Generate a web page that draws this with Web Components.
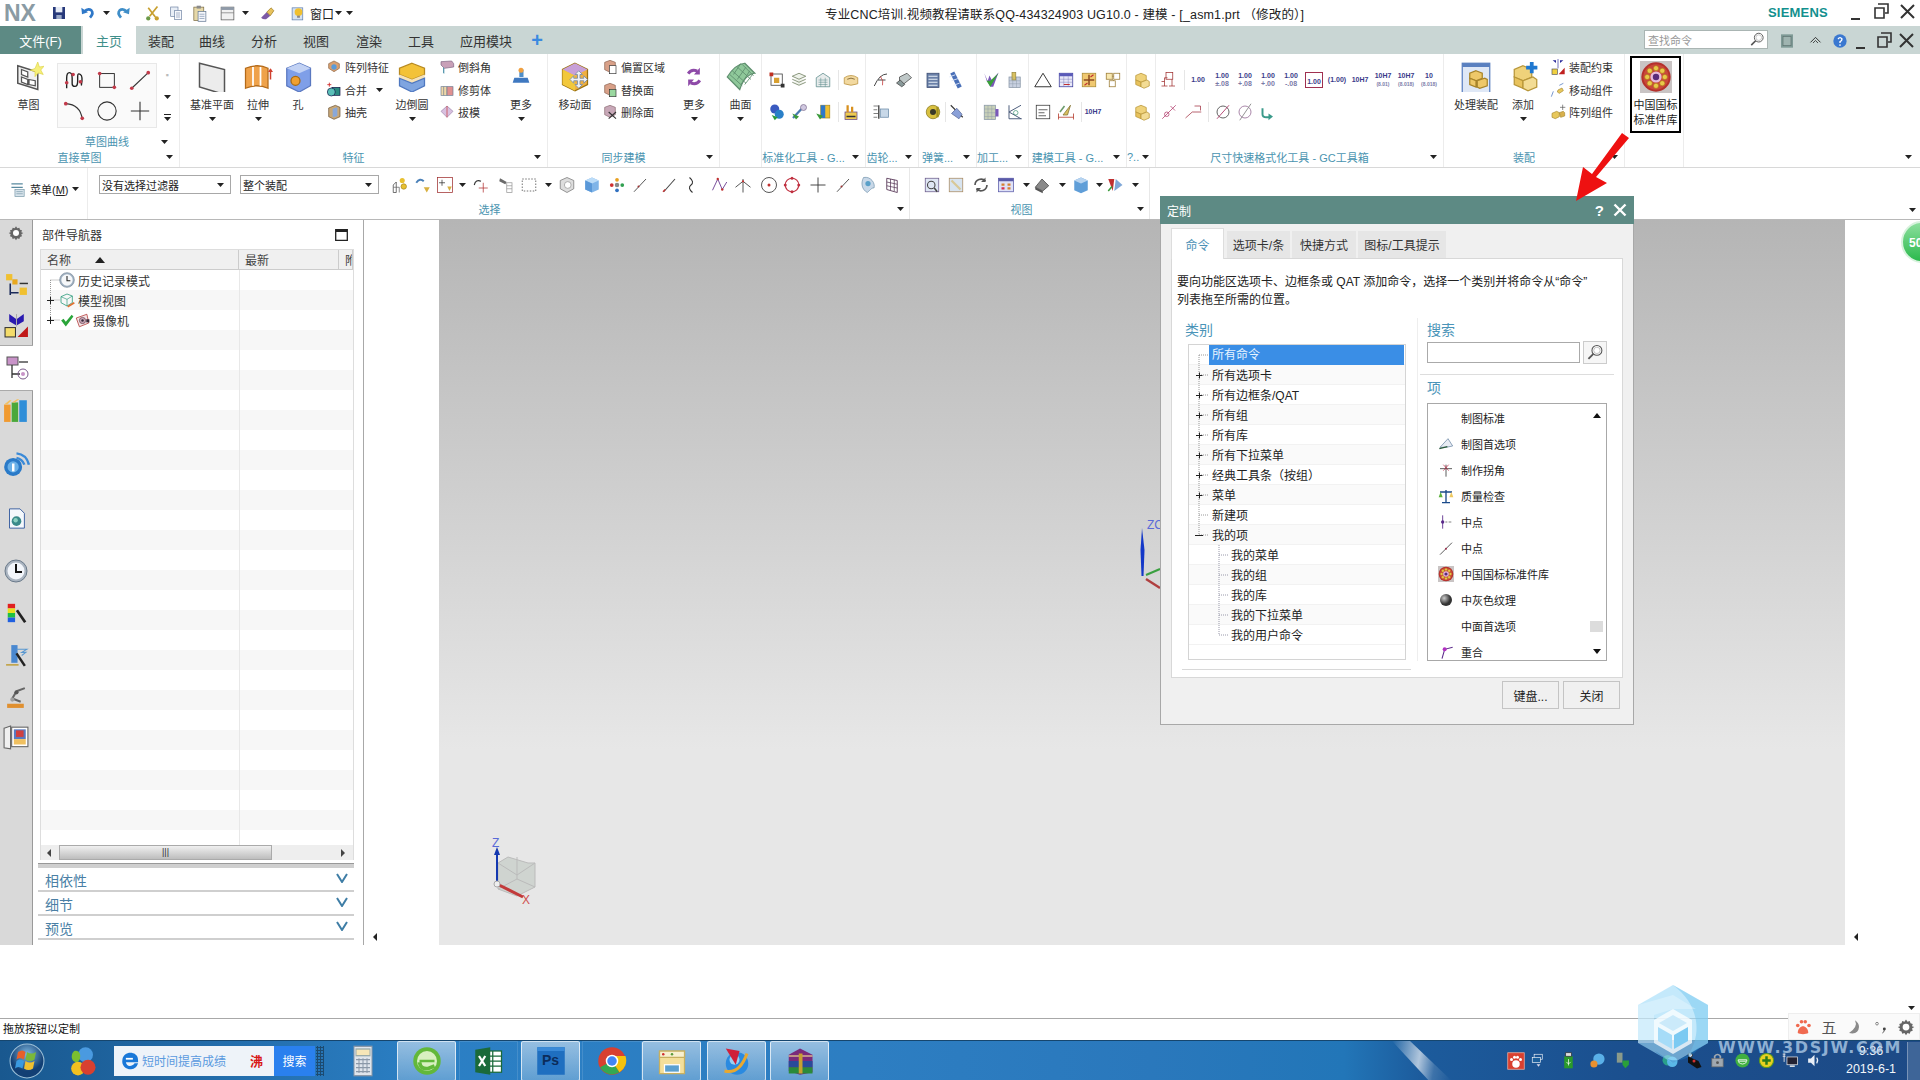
<!DOCTYPE html>
<html lang="zh">
<head>
<meta charset="utf-8">
<title>NX</title>
<style>
  html, body { margin: 0; height: 1080px; overflow: hidden; background: #fff; }
  body { font: 12px "Liberation Sans", "Noto Sans CJK SC", sans-serif; color: #222; display: flex; flex-direction: column; position: relative; }
</style>
</head>
<body>
<nx-titlebar></nx-titlebar>
<nx-tabs></nx-tabs>
<nx-ribbon></nx-ribbon>
<nx-toolbar></nx-toolbar>
<nx-main></nx-main>
<nx-status>拖放按钮以定制</nx-status>
<nx-taskbar></nx-taskbar>
<nx-dialog></nx-dialog>
<nx-overlay></nx-overlay>

<script>
const BOX = (x, y, w, h, f, s) => `<rect x="${x}" y="${y}" width="${w}" height="${h}" fill="${f}"${s ? ` stroke="${s}"` : ''}/>`
const P = (d, f, s, w) => `<path d="${d}" fill="${f || 'none'}"${s ? ` stroke="${s}" stroke-width="${w || 1}"` : ''}/>`
const C = (x, y, r, f, s, w) => `<circle cx="${x}" cy="${y}" r="${r}" fill="${f || 'none'}"${s ? ` stroke="${s}" stroke-width="${w || 1}"` : ''}/>`

const cubes = P('M12 3l7 3v6l-7 3-7-3V6z', '#efd27a', '#b89638') + P('M5 12l7 3v6l-7-3z', '#e8c25c', '#b89638') + P('M12 15l8-3 3 2v6l-7 3-4-2z', '#f3dc94', '#b89638')
const wheel = (() => {
  let d = ''
  for (let i = 0; i < 8; i++) {
    const a = i * Math.PI / 4
    d += C((12 + 6.6 * Math.cos(a)).toFixed(1), (12 + 6.6 * Math.sin(a)).toFixed(1), 1.9, '#e9c84a', '#a87a10', .4)
  }
  return BOX(0, 0, 24, 24, '#c9c4c4') + C(12, 12, 11, '#b5302c') + C(12, 12, 9.5, '#c9483a') + d + C(12, 12, 4.2, '#e8b8d8') + C(12, 12, 2.4, '#5a2a7a')
})()

const ICONS = {
  save: BOX(3, 3, 18, 18, '#27397a') + BOX(7, 3, 10, 8, '#e6ebf5') + BOX(8, 15, 8, 6, '#9aa8c6'),
  undo: P('M6 10q6-6 11-2 4 4-2 11', null, '#2f78c8', 4) + P('M2 4l1 10 9-3z', '#2f78c8'),
  redo: P('M18 10q-6-6-11-2-4 4 2 11', null, '#3f8ec8', 4) + P('M22 4l-1 10-9-3z', '#3f8ec8'),
  cut: P('M19 2L8 16M6 4l10 13', null, '#c8a030', 2.4) + C(6, 19, 3, '#6c9a48') + C(18, 19, 3, '#c8a030'),
  copy: BOX(4, 3, 11, 14, '#e8eef6', '#6a7fa0') + BOX(10, 8, 10, 14, '#f6f8fc', '#6a7fa0') + P('M12 12h6M12 15h6M12 18h6', null, '#7f93b0'),
  paste: BOX(4, 3, 14, 19, '#e6d8a8', '#7a6a40') + BOX(8, 1, 6, 4, '#8a8a8a') + BOX(10, 9, 11, 14, '#f6f8fc', '#5f7590') + P('M12 13h7M12 16h7M12 19h7', null, '#7f93b0'),
  layout: BOX(3, 3, 18, 18, '#f1f1f1', '#555') + BOX(3, 3, 18, 4, '#8f9aa8') + P('M3 11h18', null, '#777'),
  brush: P('M3 18l8-8 5 5-6 5q-4 1-7-2z', '#7c5aa6') + P('M11 10l6-6 4 4-5 7z', '#e8c25c', '#9a7a20'),
  winyellow: BOX(3, 4, 15, 17, '#d5e2f2', '#5d7fb0') + C(12, 10, 5.5, '#f0c030') + BOX(10, 15, 4, 3, '#888'),
  sketch: P('M3 3l16 5v14L3 17z', '#f1f1f1', '#555', 1.2) + P('M6 6l5 2v4l-5-2zM6 12l5 2v4l-5-2zM12 14l5 1v4l-5-1z', '#fff', '#555') + P('M19 0l1.3 4 3.7-.6-2.6 3 2 3.6-4-1.3-2.6 3v-4l-3.8-1.2 3.8-1.3z', '#f6ef7a', '#dcd040', .5),
  profile: P('M4 21V10q0-6 3-6t3 6v6q0 3 3 3t3-6V8q0-4 3-2t1 12', null, '#222', 1.5) + C(4, 15, 2, '#c23a4a') + C(11, 6, 2, '#c23a4a') + C(19, 14, 2, '#c23a4a'),
  rect: BOX(4, 5, 16, 15, 'none', '#222') + C(4, 5, 2, '#c23a4a') + C(20, 20, 2, '#c23a4a'),
  line: P('M3 21L21 4', null, '#333', 1.2) + C(3, 21, 2, '#c23a4a') + C(21, 4, 2, '#c23a4a'),
  arc: P('M3 4q16 1 18 17', null, '#333', 1.2) + C(3, 4, 2, '#c23a4a') + C(21, 20, 2, '#c23a4a'),
  circle: C(12, 12, 10, null, '#333', 1.2),
  plus: P('M12 2v20M2 12h20', null, '#333', 1.2),
  plane: P('M2 1l20 5v20L2 20z', '#ececec', '#555', 1.2),
  extrude: P('M2 5q10-4 18 0v16q-9-4-18 0z', '#efa24a', '#b36a1a') + P('M8 4v15M14 4v15', null, '#fff', 1.4) + P('M22 6v8', null, '#d04030', 1.2) + P('M20 8l2-3 2 3', '#d04030'),
  hole: P('M3 5l10-4 9 4v14l-9 5-10-5z', '#7f9fe8', '#5a78c0') + P('M3 5l10 4 9-4-9-4z', '#c2d2f4') + C(10, 15, 3.6, '#f0a030', '#a86a10'),
  blend: P('M12 1l10 4v5l-10 4L2 10V5z', '#f3c238', '#b88a20') + P('M2 10l10 4 10-4v3l-10 4-10-4z', '#f6e2b8') + P('M2 13l10 4 10-4v6l-10 5-10-5z', '#7fa5e0', '#4f78c0'),
  morefeat: P('M10 3h5v9h-5z', '#4f8ec8') + C(12, 4, 3, '#f0a040') + P('M4 13h16l2 6H2z', '#3f78c0'),
  movef: P('M12 1l10 5v12l-10 5-10-5V6z', '#f0b040', '#9a7010') + P('M12 1l10 5-10 5L2 6z', '#c8a0d8') + P('M2 6l10 5v12L2 18z', '#f2c83c') + P('M15 7l3 3h-2v3h3v-2l3 3-3 3v-2h-3v3h2l-3 3-3-3h2v-3h-3v2l-3-3 3-3v2h3v-3h-2z', '#eef0f4', '#7f8fa4', .7),
  moresync: P('M5 8q4-6 11-3M19 16q-4 6-11 3', null, '#8e4aa8', 3.5) + P('M19 1v8h-7zM5 23v-8h7z', '#8e4aa8'),
  surface: P('M1 12Q7 2 15 1l8 8q-8 1-12 13z', '#8fc89a', '#5f8f6f') + P('M5 7l11 10M9 4l11 10M13 2l9 9M3 10l10 9M9 14l7-10M6 10l6-9M12 18l7-11M15 18l7-9', null, '#5f8f6f', .7),
  process: BOX(1, 1, 22, 24, '#dfe8f6', '#5a80c0') + BOX(1, 1, 22, 3, '#5a80c0') + P('M12 7l5 2v4l-5 2-5-2V9z', '#eec869', '#a8842a') + P('M7 13l5 2v5l-5-2zM13 15l6-2 2 1v5l-6 2-2-1z', '#eec869', '#a8842a'),
  add: cubes + P('M19 0v9M14.5 4.5h9', null, '#1f78d0', 3),
  gb: wheel,
  pattern: P('M12 3l8 4v7l-8 5-8-5V7z', '#d9a070', '#8a6040') + C(12, 12, 4, '#5a9ad8'),
  unite: BOX(9, 8, 12, 12, '#2a8a80', '#114') + C(8, 15, 6, '#5ac0b8', '#114') + P('M5 1v6M2 4h6', null, '#d03030', 1.4),
  shell: P('M4 6l10-4 7 3v14l-9 4-8-4z', '#c8a878', '#6a5030') + P('M10 7l7-2v13l-7 2z', '#8aa8d8'),
  chamfer: P('M3 4l16-1 3 4v5L8 14 3 9z', '#c8a0b8', '#7a6080') + P('M8 14v8l-2-1V12z', '#5a9ab0'),
  trim: BOX(3, 7, 9, 13, '#f0d8a8', '#6a7a90') + BOX(12, 7, 9, 13, '#e09090', '#6a7a90') + P('M7 7v13', null, '#6a7a90'),
  draft: P('M12 3l9 8-9 9-9-9z', '#d8c0e0', '#9a80a8') + P('M12 3v17', null, '#c83030'),
  offset: P('M4 5l8-3 8 3v11l-8 4-8-4z', '#d8a088', '#8a6050') + BOX(11, 10, 10, 12, '#fff', '#333'),
  replace: P('M4 5l8-3 8 3v11l-8 4-8-4z', '#d8a088', '#8a6050') + BOX(11, 11, 10, 11, '#9ad8a0', '#333'),
  del: P('M4 5l8-3 8 3v11l-8 4-8-4z', '#c8a8b8', '#8a6a70') + P('M10 12l11 10M21 12L10 22', null, '#333', 1.6),
  constraint: P('M4 2l5 4v-4M20 2l-5 4v-4', '#2a2a9a') + P('M12 0v14', null, '#2a2a9a') + BOX(3, 15, 8, 8, '#f0d040', '#555') + P('M13 23l9-10v10z', '#c02020'),
  movecomp: P('M12 12l6-3 2 4-6 4-3-2z', '#e8c85c', '#a88a30') + P('M2 22l3-8M20 2l-6 3', null, '#7a9ad0', 1.5),
  patcomp: P('M3 14l7-3 4 2v6l-6 3-5-2z', '#e8c85c', '#a88a30') + P('M14 13l6-2 2 2v5l-6 2z', '#d8b04c', '#a88a30') + P('M19 1v8M15 5h8', null, '#555', 1),
  std1: BOX(4, 4, 15, 15, 'none', '#333', 1.4) + BOX(2, 2, 5, 5, '#c03020') + BOX(17, 17, 5, 5, '#333') + BOX(8, 9, 7, 7, '#d8a030'),
  std2: P('M12 3l9 4-9 4-9-4zM3 11l9 4 9-4M3 15l9 4 9-4', '#eef2ea', '#6a7a5a'),
  std3: P('M3 9l9-6 9 6v12H3z', '#e8ecec', '#5a8a8a') + P('M6 12h12M6 15h12M6 18h12M9 9v12M15 9v12', null, '#5a8a8a', .7),
  std4: P('M3 9q9-6 18 0v8q-9 4-18 0z', '#f2d9a0', '#b8903c') + P('M7 11q5-3 10 0', null, '#6a5020'),
  std5: C(9, 8, 6, '#3a5ac0') + C(15, 15, 6, '#2a80c8') + P('M5 16l4 7 4-4z', '#2a9a3a'),
  std6: P('M4 20L18 5', null, '#4a7ab0', 3) + C(18, 6, 4, '#d0c8e0', '#807090') + P('M3 14l5 8 4-4z', '#3a9a3a'),
  std7: BOX(9, 3, 12, 17, '#f0c030', '#a88a20') + BOX(9, 3, 6, 17, '#2f78c8') + P('M3 14l5 8 4-5z', '#3a9a3a'),
  std8: BOX(4, 12, 16, 10, '#eeca50', '#6a4a8a') + P('M6 12V3h3v9M12 12V5h3v7', '#d8901e') + P('M6 18h12', null, '#333', 2),
  gear1: P('M3 20Q10 4 20 4', null, '#333', 1.2) + P('M8 12h10', null, '#333', 1.2) + P('M11 7q5 6 3 12', null, '#c03030'),
  gear2: P('M6 8l10-5 6 6-10 8-6-3z', '#bfc8c8', '#444') + P('M2 16l7 5 4-3-6-6z', '#8a9a9a', '#444'),
  gear3: P('M2 4h6M2 9h5M2 14h6M2 19h5', null, '#555') + BOX(11, 8, 11, 11, '#c8d8e8', '#6a8aa8') + BOX(8, 3, 2, 18, '#555'),
  sp1: BOX(4, 3, 16, 19, '#6a80a8', '#3a4a70') + P('M6 7h12M6 11h12M6 15h12M6 19h12', null, '#e8eef6', 1.5),
  sp2: P('M7 2l10 20', null, '#4a70b8', 6) + P('M3 8l8-3M6 13l9-3M9 19l8-3', null, '#e0e8f8', 1.2),
  sp3: C(12, 12, 9, '#d8c040', '#8a7a20') + C(12, 12, 4, '#3a3a2a') + P('M18 5v14', null, '#a09020', 3),
  sp4: P('M5 3l16 16', null, '#333', 1.5) + P('M6 14l7-7 7 8-4 6z', '#8aa0d8', '#5a6a9a'),
  mach1: P('M3 3l4 12 3-9 3 6 9-10-7 19h-4z', '#7a58b8') + P('M6 13l5 8 11-18-11 10z', '#3aa03a'),
  mach2: BOX(4, 8, 15, 14, '#c8d0e0', '#8a98a8') + BOX(8, 2, 5, 10, '#d8c060', '#9a8a40') + P('M4 13h15M4 17h15M9 8v14M14 8v14', null, '#8a98a8', .6),
  mach3: BOX(3, 3, 15, 19, '#c8d0b8', '#8a98a8') + P('M3 8h15M3 13h15M3 18h15M8 3v19M13 3v19', null, '#8a98a8', .6) + BOX(18, 8, 4, 10, '#7a58b8'),
  mach4: P('M4 3v18h17M4 12L20 3M4 12l16 9', null, '#4a5a7a', 1.3) + C(13, 13, 3, null, '#4a9a7a'),
  tri: P('M12 3L23 21H1z', '#fff', '#222', 1.2),
  table: BOX(3, 3, 18, 18, '#e8e8f8', '#3a3a9a') + BOX(3, 3, 18, 4, '#5a5ab8') + P('M3 11h18M3 15h18M9 7v14M15 7v14', null, '#7a7ab8', .6) + P('M9 18h8', null, '#c03030', 1.4),
  mt3: BOX(3, 3, 18, 18, '#f0c870', '#a88a30') + P('M12 5v14M5 12h14', null, '#8a4a20', 2) + P('M6 19l4-3M14 8l4-3', null, '#c03030', 1.5),
  mt4: BOX(3, 3, 8, 8, '#f8e8b0', '#9a7a30') + BOX(13, 3, 8, 8, '#fff', '#9a7a30') + BOX(7, 13, 8, 8, '#fff', '#9a7a30') + P('M11 7h2M11 11l2 2', null, '#9a7a30'),
  note: BOX(3, 3, 18, 18, '#fff', '#333', 1.2) + P('M6 9h12M6 13h8M6 17h10', null, '#333'),
  dim: P('M2 14v8M22 14v8M2 19h20', null, '#b03020') + P('M8 16L18 3l-4 13z', '#d8c060', '#807030') + P('M4 12l6-8', null, '#6a9a6a', 2),
  folders: cubes,
  step: BOX(8, 2, 9, 9, 'none', '#a03030') + P('M2 20h8M6 20V9h4M16 11v9M12 20h8', null, '#a03030') + P('M2 14h4', null, '#a03030'),
  tol1: P('M3 21L21 3', null, '#b03a6a', 1) + C(9, 15, 3, null, '#b03a6a') + P('M14 4l6 6', null, '#b03a6a'),
  tol2: P('M2 20l9-8h12', null, '#a03040') + P('M14 4h8v6', null, '#a03040'),
  phi1: C(12, 12, 8, null, '#555', 1.2) + P('M4 21L20 3', null, '#b03a6a', 1.2),
  phi2: C(12, 12, 8, null, '#a07aa0', 1.2) + P('M5 23L20 1', null, '#888', 1.2),
  hook: P('M6 7v8q0 4 5 4h5', null, '#3a9a8a', 2.6) + P('M14 14v9l6-5z', '#3a9a8a'),
  menu: P('M2 4h16M2 9h16', null, '#5a8aa0', 1.6) + BOX(7, 12, 13, 10, '#d8e4ec', '#7a9aaa') + P('M9 15h9M9 18h9', null, '#7a9aaa'),
  sel1: P('M3 22V12l4-4v14z', '#fff', '#444') + P('M3 15h8v7', null, '#666') + C(15, 6, 3.4, '#e8c030') + C(17, 14, 3.6, '#e8c030', '#a88a20'),
  sel2: P('M3 9q5-7 10-2', null, '#4a80b8', 2.6) + P('M13 15h8l-4 7z', '#d8b040'),
  sel3: BOX(2, 2, 20, 20, '#fff', '#a03030', 1.2) + P('M8 5v8M4 9h8', null, '#333') + P('M15 14h6l-3 6z', '#d8b040'),
  sel4: P('M3 12q2-8 9-5', null, '#333', 1.5) + P('M15 9v13M9 16h12', null, '#b03030'),
  sel5: P('M4 3l9 5-2 3-8-4z', '#6a6a6a') + BOX(13, 9, 7, 13, 'none', '#9a9a9a') + P('M13 13h7M13 17h7', null, '#9a9a9a'),
  dashes: `<rect x="3" y="4" width="18" height="16" fill="none" stroke="#444" stroke-dasharray="2 2"/>`,
  cubeg: P('M12 2l9 4v11l-9 5-9-5V6z', '#ddd', '#777') + C(13, 12, 4.5, '#fff', '#999'),
  cubeb: P('M12 2l9 4v12l-9 4-9-4V6z', '#7fb4e8') + P('M12 2l9 4-9 4-9-4z', '#bcdcf8') + P('M12 10v12L3 18V6z', '#5a98d8'),
  dots: C(5, 12, 2.5, '#d03030') + C(12, 5, 2.5, '#e8a020') + C(19, 12, 2.5, '#30a050') + C(12, 19, 2.5, '#3070c0') + C(12, 12, 3, '#888'),
  ln: P('M4 21L20 4', null, '#444', 1.2) + C(10, 14, 1.3, '#a03030'),
  ln2: P('M5 21L20 4', null, '#444', 1.4) + P('M4 21l3-3', null, '#c03030', 2),
  curve: P('M10 2q7 6 2 10t2 10', null, '#333', 1.4),
  zig: P('M2 19L9 4l6 14 6-10', null, '#6a3a90', 1.2) + C(9, 4, 1.6, '#c03030') + C(15, 18, 1.6, '#c03030'),
  fork: P('M12 4v18M2 15l10-8 10 8', null, '#444', 1.2) + C(12, 7, 1.5, '#c03030'),
  ptc: C(12, 12, 10, null, '#444', 1.2) + C(12, 12, 2, '#c03030'),
  ring: C(12, 12, 9, null, '#c03040', 1.5) + C(12, 3, 2, '#c03040') + C(12, 21, 2, '#c03040') + C(3, 12, 2, '#c03040') + C(21, 12, 2, '#c03040'),
  wire: P('M6 2c10-2 16 8 14 14-3-1-6 4-9 6C4 18 2 10 6 2z', '#c8d8e8', '#7a98b0') + C(12, 10, 3.5, '#5aa0c8'),
  gridc: P('M5 3l14 3v16L5 18z', '#fff', '#5a3a5a', 1.2) + P('M10 4v15M15 5v15M5 8l14 3M5 13l14 3', null, '#5a3a5a', 1),
  v1: BOX(3, 3, 18, 18, '#dfe6f4', '#6a5a8a') + C(11, 12, 5, null, '#444', 1.4) + P('M15 16l4 5', null, '#444', 2),
  v2: BOX(3, 3, 18, 18, '#d8e4f0', '#a88a60') + P('M6 6l12 12', null, '#d8c898', 3),
  v3: P('M4 12a8 8 0 0 1 14-5M20 12a8 8 0 0 1-14 5', null, '#555', 2.2) + P('M18 2v6h-6M6 22v-6h6', '#555'),
  v4: BOX(2, 3, 20, 18, '#dfe2f8', '#5a5aa8') + BOX(2, 3, 20, 4, '#5a5aa8') + BOX(6, 10, 4, 3, '#d88030') + BOX(14, 10, 4, 3, '#d88030') + BOX(6, 15, 4, 3, '#d83050') + BOX(14, 15, 4, 3, '#d88030'),
  v5: P('M3 15l9-11 9 9-8 7z', '#8a8a8a', '#444') + P('M3 15l10 5v3l-10-5z', '#555'),
  v6: P('M12 2l9 4v13l-9 4-9-4V6z', '#5f9ed8') + P('M12 2l9 4-9 4-9-4z', '#b8d4f0'),
  v7: P('M3 4l6 16 2-16z', '#c03030') + P('M13 4l-2 16 11-8z', '#80a8d8') + P('M3 20l5-6', null, '#3a9a3a', 2),
  clock: C(12, 12, 11, '#9fb0c0', '#7a8a9a') + C(12, 12, 8.5, '#f6f8fa') + P('M12 6v7h5', null, '#222', 1.6),
  wire3d: P('M3 7l9-4 8 3v10l-8 5-9-5z', 'none', '#2a9a7a', 1.2) + P('M3 7l9 4 8-5M12 11v10', null, '#2a9a7a') + P('M13 22l10-6', null, '#e07030', 2.6),
  check: P('M2 13l4-3 4 5L20 3l3 3-13 17z', '#2aa53a'),
  camera: P('M2 8l17-6 3 14-15 6z', '#f4e6e6', '#b03030', 1.2) + C(12, 12, 5, '#c8a8b8', '#5a2a3a') + C(12, 12, 2, '#3a2a3a') + BOX(18, 10, 5, 5, '#3a2a3a'),
  tree1: BOX(2, 2, 6, 6, '#f0c030') + BOX(8, 7, 5, 5, '#e8a820') + P('M6 11v11M6 20h8', null, '#1a2a5a', 1.5) + P('M15 11h8', null, '#333', 1.4) + BOX(15, 15, 7, 7, '#f0c030'),
  rail2: P('M5 1v7l7 4 7-4V1l-7 5z', '#2a1ab0') + P('M12 1v12', null, '#aaa') + BOX(1, 14, 10, 9, '#f4dc6a', '#333') + P('M13 23l10-10v10z', '#c01818'),
  rail3: BOX(2, 1, 11, 8, '#c893c8', '#555') + P('M7 9v13M7 18h8', null, '#333', 1.3) + P('M14 6h9', null, '#333', 1.3) + C(18, 18, 5, null, '#7a5a8a') + C(18, 18, 2, '#c893c8'),
  books: P('M1 7h6v16H1z', '#f09a30') + P('M8 5h6v18H8z', '#4aa83a') + P('M15 3h7v20h-7z', '#2f8ed8') + P('M1 7l5-4h2L4 7zM8 5l5-3h2l-4 3z', '#f3c060'),
  wifi: C(9, 15, 8, '#2a7ac8') + C(9, 15, 5, '#6ab0e8') + BOX(8, 12, 2.2, 7, '#fff') + P('M12 3q9 1 11 10M12 7q5 1 7 6', null, '#3a8ad8', 2.2),
  doc: P('M4 1h12l5 5v17H4z', '#f4f8fc', '#3a60a0', 1.1) + C(12, 15, 5.5, '#3a8a8a') + C(11, 14, 2.5, '#8ad0c0'),
  clock2: C(12, 12, 11, '#aab4c0', '#6a7a8a') + C(12, 12, 8.5, '#f2f5fa') + P('M12 5v8h6', null, '#111', 2),
  ramp: BOX(3, 2, 8, 5, '#e02020') + BOX(3, 7, 8, 5, '#e8e020') + BOX(3, 12, 8, 5, '#20c040') + BOX(3, 17, 8, 5, '#2060e0') + P('M13 9l9 13', null, '#222', 3),
  flag: P('M7 2h6v17H7z', '#4a88d0') + P('M12 6h10l-5 3 4 0-4 3', null, '#5a98d0') + P('M12 10l8 12', null, '#222', 2.4) + P('M2 21h12', null, '#c0a040', 1.5),
  robot: P('M12 6l8-3M12 6l-4 7 8 3', null, '#666', 2) + C(12, 7, 2, '#555') + BOX(3, 18, 16, 4, '#e09030') + C(8, 14, 2, '#a0a0a0'),
  roles: P('M1 3l6-2v21l-6-1z', '#f0f0f0', '#666') + BOX(8, 2, 15, 18, '#fff', '#666') + BOX(10, 4, 11, 9, '#5a7ac0') + BOX(12, 5, 7, 6, '#d04040') + BOX(10, 13, 11, 5, '#f0c060'),
  gearsm: P('M12 2l2 3 3-1 1 3 3 1-1 3 3 1-3 2 1 3-3 1-1 3-3-1-2 3-2-3-3 1-1-3-3-1 1-3-3-2 3-1-1-3 3-1 1-3 3 1z', '#666') + C(12, 12, 4.5, '#fff'),
  mag: C(14, 9, 7, '#fff', '#555', 1.5) + C(14, 9, 4.5, null, '#aaa') + P('M9 14l-7 7', null, '#555', 2.6),
  fit: BOX(3, 2, 18, 20, '#7f9a96') + BOX(6, 5, 12, 14, '#9fb4b0', '#5a706c'),
  chev: P('M4 15l8-8 8 8', null, '#222', 1.4) + P('M8 16l4-4 4 4', null, '#222', 1.2),
  help: C(12, 12, 10, '#3a78d0') + P('M9 9q3-4 6 0 0 3-3 4v2', null, '#fff', 2) + C(12, 18, 1.3, '#fff'),
  distort: `<defs><radialGradient id="gb" cx=".35" cy=".35"><stop offset="0" stop-color="#ccc"/><stop offset="1" stop-color="#333"/></radialGradient></defs><circle cx="12" cy="12" r="9" fill="url(#gb)"/>`,
  pt1: P('M7 2v20', null, '#5a2a8a', 1.3) + C(7, 12, 2.5, '#5a2a8a') + P('M11 12h3M16 12h4', null, '#444'),
  ln3: P('M3 22L21 4', null, '#333', 1.2) + C(12, 13, 1.5, '#a03050'),
  ln4: P('M6 22L10 8l12-3', null, '#5a2a8a', 1.6) + C(10, 8, 3, '#b030c0'),
  draftp: P('M3 17L15 4l7 11-10 2z', '#e8ecf4', '#5a7a9a') + P('M2 19l12-3', null, '#2a5a3a', 2),
  corner: P('M12 4v18M3 10h18', null, '#333', 1.2) + P('M8 4l8 9M16 4l-8 9', null, '#c02040'),
  balance: P('M12 3v18M6 22h12M3 6h18', null, '#1a4a8a', 2) + P('M1 14l3-8 3 8z', '#5ab03a') + P('M17 14l3-8 3 8z', '#eec860'),
  orb: `<defs><radialGradient id="ob" cx=".5" cy=".3"><stop offset="0" stop-color="#7fb8e0"/><stop offset="1" stop-color="#123f74"/></radialGradient></defs><circle cx="12" cy="12" r="11.3" fill="url(#ob)" stroke="#9cc0d8" stroke-width=".7"/>` + P('M6 6q3-2 5 0l-1 5q-3-2-5 0z', '#e8602a') + P('M12 6q3 2 6 0l-1 5q-3 2-6 0z', '#7ab83a') + P('M5 12q2-2 5 0l-1 5q-3-2-5 0z', '#3a9ae0') + P('M11 12q3 2 6 0l-1 5q-3 2-6 0z', '#f0c030'),
  s360: C(14, 7, 6, '#4a9ae0') + P('M5 4c6-2 6 8 2 9 -5 0-5-7-2-9z', '#7ac030') + C(8, 18, 5.5, '#f0c020') + C(16, 17, 6, '#d84030'),
  ie: P('M20 14H9q1 5 6 4 3-1 4-3h4q-2 6-8 7C8 22 4 17 5 11c1-7 9-10 15-6 3 2 3 6 3 9z', '#1a78d8') + BOX(9, 9, 8, 2, '#fff'),
  calc: BOX(3, 1, 18, 22, '#dfe5ec', '#8a98a8') + BOX(5, 3, 14, 5, '#f6e6b8', '#9aa') + P('M5 11h14M5 14h14M5 17h14M5 20h14M8 10v11M12 10v11M16 10v11', null, '#8a98a8'),
  gie: C(12, 12, 11, '#62b83a') + C(12, 12, 8, '#d8f0c0') + P('M6 11h12v2H6z', '#62b83a') + P('M6 13q1 6 7 5l5-2', null, '#62b83a', 3),
  excel: BOX(9, 4, 13, 17, '#fff', '#1a6a3a') + P('M9 8h13M9 12h13M9 16h13M15 4v17', null, '#1a6a3a') + P('M1 3l12-2v22L1 21z', '#1a6a3a') + P('M4 8l5 8M9 8l-5 8', null, '#fff', 1.8),
  ps: BOX(1, 1, 22, 22, '#1f6fc0') + BOX(1, 1, 22, 3, '#3a8ad8'),
  chrome: C(12, 12, 11, '#d84030') + P('M12 12L2.5 17A11 11 0 0 0 18 21z', '#34a853') + P('M12 12L18 21A11 11 0 0 0 22.8 8H12z', '#f4c20d') + C(12, 12, 5, '#fff') + C(12, 12, 3.8, '#4285f4'),
  folder: P('M2 4h20v18H2z', '#f4df9a', '#c8b060') + P('M2 4h20v5H2z', '#f8f0d0', '#c8b060') + BOX(6, 15, 12, 6, '#5aa0d0', '#fff') + C(5, 6.5, 1, '#d03030') + C(12, 6.5, 1, '#5a9a3a'),
  nxapp: C(12, 14, 9, '#2a8ae0') + C(10, 11, 4, '#9ad0f0') + P('M3 2l11 2-3 11z', '#d0203a') + P('M2 20q12 3 18-14', null, '#e8a830', 2.4),
  rar: P('M3 7l9-5 10 5v14l-10 2-9-3z', '#7a2a7a') + BOX(3, 12, 19, 5, '#2a4a9a') + BOX(3, 17, 19, 5, '#2a8a3a') + P('M3 8h19', null, '#e8d090', 1) + BOX(11, 6, 3, 16, '#c8a030'),
  paw: BOX(1, 1, 22, 22, '#d84030', '#f0b0a0') + C(12, 16, 5, '#fff') + C(6, 10, 2, '#fff') + C(10, 7, 2, '#fff') + C(14, 7, 2, '#fff') + C(18, 10, 2, '#fff'),
  usb: BOX(6, 6, 12, 17, '#2a9a2a') + BOX(8, 1, 8, 5, '#ddd', '#333') + P('M12 10v9M9 14l3 3 3-3', null, '#fff'),
  traycl: C(14, 10, 8, '#5ab0e8') + C(7, 17, 5, '#e89030'),
  trayp: BOX(4, 1, 8, 14, '#8a9a8a') + P('M12 12h9v6l-5 5-4-5z', '#2aa03a'),
  bubbles: C(9, 11, 7, '#2aa08a') + C(15, 13, 7, '#5ab8e8'),
  mouse: P('M4 6l14 6 4 8-6 2-12-8z', '#111') + C(7, 4, 3, '#fff', '#111') + C(12, 12, 2, '#d03030'),
  lock: BOX(4, 9, 16, 12, '#a0a8b0', '#6a6a6a') + P('M8 9V6q4-5 8 0v3', null, '#a0a8b0', 2.4) + C(12, 15, 2, '#555'),
  g360: C(12, 12, 10, '#40b040') + P('M6 11h12v2H6zM6 14q6 6 12 0', null, '#fff', 1.2),
  yplus: C(12, 12, 10, '#e8d020', '#5a9a20', 1.5) + P('M12 6v12M6 12h12', null, '#2a7a1a', 3.5),
  net: BOX(7, 7, 15, 11, '#223', '#eee', 1.2) + P('M3 2v12M1 3h4M1 6h4', null, '#eee', 1.2) + BOX(11, 19, 7, 2, '#eee'),
  speaker: P('M3 9h4l5-5v16l-5-5H3z', '#e8eef6') + P('M15 8q3 4 0 8', null, '#e8eef6', 1.6),
  restoret: BOX(5, 2, 13, 8, 'none', '#fff', 1.5) + BOX(2, 7, 13, 8, '#1c5f9c', '#fff') + P('M9 18h6l-3 4z', '#dde'),
  imepaw: P('M5 20c0-6 4-9 7-9s7 3 7 9c-3 2-11 2-14 0z', '#f06a50') + C(5, 10, 2.4, '#f06a50') + C(10, 5, 2.4, '#f06a50') + C(15, 5, 2.4, '#f06a50') + C(20, 10, 2.4, '#f06a50'),
  moon: P('M15 2q5 10-9 19 14 3 15-9 0-6-6-10z', '#8a8a8a'),
  dot: C(6, 7, 2, null, '#777', 1.3) + C(17, 15, 2.2, '#444') + P('M17 16q0 4-3 5', null, '#444', 1.3)
}

function ic(name, size = 18, h) {
  return `<nx-icon name="${name}" size="${size}"${h ? ` h="${h}"` : ''}></nx-icon>`
}

// lays out items by their wanted centres, with margins
function strip(x0, items) {
  let right = x0
  return items.map(([c, html, w = 24]) => {
    const m = c - w / 2 - right
    right = c + w / 2
    const inner = ICONS[html] ? ic(html, w > 18 ? 18 : w) : html
    return `<span style="flex:0 0 ${w}px;width:${w}px;margin-left:${m}px;display:inline-flex;align-items:center;justify-content:center;white-space:nowrap">${inner}</span>`
  }).join('')
}

const CARET = '<svg width="7" height="4" viewBox="0 0 7 4"><path d="M0 0h7L3.5 4z" fill="#222"/></svg>'
const SEP = '<i style="display:block;width:1px;height:20px;background:#e6e6e6"></i>'

class Base extends HTMLElement {
  constructor() {
    super()
    this.attachShadow({mode: 'open'})
  }
  connectedCallback() {
    if (!this.shadowRoot.innerHTML) this.shadowRoot.innerHTML = this.template
  }
}

customElements.define('nx-icon', class extends Base {
  get template() {
    const s = this.getAttribute('size') || 18
    const h = this.getAttribute('h') || s
    return `<style>:host{display:inline-flex;flex:none;line-height:0}</style>
    <svg width="${s}" height="${h}" viewBox="0 0 24 24" preserveAspectRatio="none">${ICONS[this.getAttribute('name')] || ''}</svg>`
  }
})

customElements.define('nx-titlebar', class extends Base {
  get template() {
    return `<style>
      :host { display: flex; height: 26px; flex: none; align-items: center; position: relative; background: #fff; }
      b { font: bold 23px "Liberation Sans", sans-serif; color: #8a9ba4; width: 40px; padding-left: 4px; box-sizing: border-box; }
      .q { display: flex; align-items: center; }
      .title { position: absolute; left: 825px; top: 4px; font-size: 12.5px; letter-spacing: .15px; white-space: nowrap; color: #222; }
      .sm { position: absolute; left: 1768px; top: 5px; font: bold 13px "Liberation Sans", sans-serif; color: #12908e; letter-spacing: .2px; }
      .win { position: absolute; left: 1846px; top: 2px; display: flex; gap: 7px; align-items: center; color: #222; }
    </style>
    <b>NX</b>
    <div class="q">${strip(40, [
      [59, 'save', 16], [88, 'undo', 16], [106, CARET, 8], [123, 'redo', 16], [152, 'cut', 17], [176, 'copy', 16],
      [199, 'paste', 17], [227, 'layout', 17], [245, CARET, 8], [267, 'brush', 17], [298, 'winyellow', 17],
      [322, '<span style="font-size:12px">窗口</span>', 26], [338, CARET, 8], [349, CARET, 8]
    ])}</div>
    <div class="title">专业CNC培训.视频教程请联系QQ-434324903 UG10.0 - 建模 - [_asm1.prt （修改的）]</div>
    <div class="sm">SIEMENS</div>
    <div class="win"><nx-win kind="min"></nx-win><nx-win kind="res"></nx-win><nx-win kind="cls"></nx-win></div>`
  }
})

customElements.define('nx-win', class extends Base {
  get template() {
    const k = this.getAttribute('kind')
    const d = {
      min: '<path d="M5 17h9" stroke="#333" stroke-width="2"/>',
      res: '<path d="M6 2h10v9h-3M3 6h9v10H3z" fill="none" stroke="#333" stroke-width="1.6"/>',
      cls: '<path d="M3 3l13 13M16 3L3 16" stroke="#333" stroke-width="2"/>'
    }[k]
    return `<style>:host{display:inline-flex}</style><svg width="19" height="19" viewBox="0 0 19 19">${d}</svg>`
  }
})

customElements.define('nx-tabs', class extends Base {
  get template() {
    const tabs = [['主页', 109], ['装配', 161], ['曲线', 212], ['分析', 264], ['视图', 316], ['渲染', 369], ['工具', 421], ['应用模块', 486]]
    return `<style>
      :host { display: flex; height: 28px; flex: none; align-items: stretch; background: #c9d6d4; position: relative; font-size: 13px; }
      .file { width: 81px; background: #5d8a84; color: #fff; display: flex; align-items: center; justify-content: center; }
      .t { display: flex; align-items: center; justify-content: center; color: #333; }
      .on { background: #fff; color: #3f8f8a; }
      .plus { color: #3a8ae0; font: bold 20px "Liberation Sans", sans-serif; }
      .search { position: absolute; left: 1644px; top: 4px; width: 124px; height: 19px; background: #fff; border: 1px solid #aab5b3; box-sizing: border-box; display: flex; align-items: center; justify-content: space-between; color: #999; font-size: 11px; padding: 0 2px 0 3px; }
      .right { position: absolute; left: 1775px; top: 5px; display: flex; align-items: center; }
    </style>
    <div class="file">文件(F)</div>
    ${strip(81, tabs.map(([t, c], i) => [c, `<div class="t ${i === 0 ? 'on' : ''}" style="width:${i === 0 ? 53 : 46}px;height:28px">${t}</div>`, t.length > 2 ? 64 : (i === 0 ? 53 : 46)]))}
    ${strip(518, [[537, '<span class="plus">+</span>', 18]])}
    <div class="search">查找命令 ${ic('mag', 15)}</div>
    <div class="right">${strip(1775, [
      [1787, 'fit', 16], [1815, 'chev', 15], [1840, 'help', 16], [1860, '<nx-win kind="min"></nx-win>', 19],
      [1884, '<nx-win kind="res"></nx-win>', 19], [1906, '<nx-win kind="cls"></nx-win>', 19]
    ])}</div>`
  }
})

customElements.define('nx-group', class extends Base {
  get template() {
    const w = this.getAttribute('w')
    const hasCaret = !this.hasAttribute('nocaret')
    return `<style>
      :host { display: flex; flex-direction: column; flex: none; box-sizing: border-box; width: ${w}px; height: 113px; border-right: 1px solid #ececec; }
      .c { flex: 1; display: flex; align-items: flex-start; min-height: 0; padding-top: 8px; box-sizing: border-box; }
      .l { height: 21px; display: flex; align-items: center; font-size: 11px; color: #4a94b0; }
      .l span { flex: 1; min-width: 0; text-align: center; white-space: nowrap; }
      .l i { flex: 0 0 20px; display: flex; justify-content: center; }
    </style>
    <div class="c"><slot></slot></div>
    <div class="l"><span>${this.getAttribute('label') || ''}</span>${hasCaret ? `<i>${CARET}</i>` : ''}</div>`
  }
})

customElements.define('nx-big', class extends Base {
  get template() {
    const w = this.getAttribute('w') || 44
    const ml = this.getAttribute('ml') || 0
    const s = this.getAttribute('s') || 30
    return `<style>
      :host { display: flex; flex-direction: column; align-items: center; flex: none; width: ${w}px; margin-left: ${ml}px; font-size: 11px; color: #333; line-height: 14px; white-space: nowrap; }
      .i { height: 30px; display: flex; align-items: center; justify-content: center; margin-bottom: 6px; }
      .cr { height: 14px; display: flex; align-items: center; }
    </style>
    <div class="i">${ic(this.getAttribute('icon'), s)}</div>
    <div><slot></slot></div>
    ${this.hasAttribute('caret') ? `<div class="cr">${CARET}</div>` : ''}`
  }
})

customElements.define('nx-small', class extends Base {
  get template() {
    return `<style>
      :host { display: flex; align-items: center; height: 22.5px; font-size: 11px; color: #333; white-space: nowrap; gap: 3px; }
    </style>${ic(this.getAttribute('icon'), 16)}<slot></slot>`
  }
})

customElements.define('nx-ribbon', class extends Base {
  get template() {
    const dim = (a, b) => `<span style="display:inline-flex;flex-direction:column;align-items:center;font:bold 7px/8px 'Liberation Sans',sans-serif;color:#3a3a8a">${a}${b ? `<span style="color:#7a7aa8;font-size:${b.length > 5 ? 5 : 7}px">${b}</span>` : ''}</span>`
    const grid = (x0, r1, r2) => `<div class="g"><div class="r">${strip(x0, r1)}</div><div class="r">${strip(x0, r2)}</div></div>`
    return `<style>
      :host { display: flex; height: 113px; flex: none; background: #fff; position: relative; border-bottom: 1px solid #d8d8d8; }
      .col { display: flex; flex-direction: column; flex: none; margin-top: -6px; }
      .g { display: flex; flex-direction: column; gap: 8px; padding-top: 6px; width: 100%; }
      .r { display: flex; height: 24px; align-items: center; }
      .gal { flex: none; width: 100px; height: 65px; margin-top: 1px; background: #fafafa; border: 1px solid #e8e8e8; box-sizing: border-box; display: grid; grid-template-columns: repeat(3, 1fr); grid-template-rows: 1fr 1fr; place-items: center; }
      .galr { flex: none; width: 20px; height: 66px; display: flex; flex-direction: column; align-items: center; justify-content: space-around; }
      .sub { position: absolute; left: 57px; top: 78px; width: 100px; text-align: center; font-size: 11px; color: #4a94b0; line-height: 20px; }
      .subc { position: absolute; left: 161px; top: 86px; line-height: 0; }
      .gb { position: absolute; left: 1630px; top: 2px; width: 51px; height: 77px; box-sizing: border-box; border: 2px solid #000; background: #fff; display: flex; flex-direction: column; align-items: center; font-size: 11px; line-height: 15px; padding-top: 3px; color: #222; text-align: center; white-space: nowrap; overflow: hidden; }
      .gb div { margin-top: 5px; }
      .tail { flex: 1; display: flex; justify-content: flex-end; align-items: flex-end; padding: 0 8px 8px 0; border-left: 1px solid #ececec; margin-left: 58px; }
    </style>
    <nx-group w="180" label="直接草图">
      <nx-big w="57" icon="sketch">草图</nx-big>
      <div class="gal">${['profile', 'rect', 'line', 'arc', 'circle', 'plus'].map(n => ic(n, 22)).join('')}</div>
      <div class="galr"><span style="color:#bbb;font-size:9px">▪</span>${CARET}<span style="line-height:0;border-top:1px solid #222;padding-top:2px">${CARET}</span></div>
    </nx-group>
    <div class="sub">草图曲线</div><div class="subc">${CARET}</div>
    <nx-group w="368" label="特征">
      <nx-big ml="8" w="48" icon="plane" caret>基准平面</nx-big>
      <nx-big ml="1" w="42" icon="extrude" caret>拉伸</nx-big>
      <nx-big ml="2" w="34" icon="hole">孔</nx-big>
      <div class="col" style="margin-left:11px;width:67px"><nx-small icon="pattern">阵列特征</nx-small><nx-small icon="unite">合并 &nbsp;${CARET}</nx-small><nx-small icon="shell">抽壳</nx-small></div>
      <nx-big ml="-1" w="40" icon="blend" caret>边倒圆</nx-big>
      <div class="col" style="margin-left:7px;width:64px"><nx-small icon="chamfer">倒斜角</nx-small><nx-small icon="trim">修剪体</nx-small><nx-small icon="draft">拔模</nx-small></div>
      <nx-big w="36" icon="morefeat" s="20" caret>更多</nx-big>
    </nx-group>
    <nx-group w="172" label="同步建模">
      <nx-big ml="5" w="44" icon="movef">移动面</nx-big>
      <div class="col" style="margin-left:5px;width:74px"><nx-small icon="offset">偏置区域</nx-small><nx-small icon="replace">替换面</nx-small><nx-small icon="del">删除面</nx-small></div>
      <nx-big ml="0" w="36" icon="moresync" s="20" caret>更多</nx-big>
    </nx-group>
    <nx-group w="42" nocaret label=""><nx-big w="41" icon="surface" caret>曲面</nx-big></nx-group>
    <nx-group w="104" label="标准化工具 - G...">${grid(762, [[777, 'std1'], [799, 'std2'], [823, 'std3'], [838, SEP, 1], [851, 'std4']], [[777, 'std5'], [799, 'std6'], [823, 'std7'], [838, SEP, 1], [851, 'std8']])}</nx-group>
    <nx-group w="53" label="齿轮...">${grid(866, [[881, 'gear1'], [904, 'gear2']], [[881, 'gear3']])}</nx-group>
    <nx-group w="58" label="弹簧...">${grid(919, [[933, 'sp1'], [956, 'sp2']], [[933, 'sp3'], [945, SEP, 1], [956, 'sp4']])}</nx-group>
    <nx-group w="52" label="加工...">${grid(977, [[991, 'mach1'], [1015, 'mach2']], [[991, 'mach3'], [1015, 'mach4']])}</nx-group>
    <nx-group w="98" label="建模工具 - G...">${grid(1029, [[1043, 'tri'], [1066, 'table'], [1089, 'mt3'], [1113, 'mt4']], [[1043, 'note'], [1066, 'dim'], [1081, SEP, 1], [1093, dim('10H7'), 20]])}</nx-group>
    <nx-group w="29" label="?..">${grid(1127, [[1141, 'folders']], [[1141, 'folders']])}</nx-group>
    <nx-group w="288" label="尺寸快速格式化工具 - GC工具箱">${grid(1156, [
      [1169, 'step'], [1184, SEP, 1], [1198, dim('1.00'), 22], [1222, dim('1.00', '±.08'), 22], [1245, dim('1.00', '+.08'), 22], [1268, dim('1.00', '+.00'), 22],
      [1291, dim('1.00', '-.08'), 22], [1314, `<span style="border:1px solid #a03050;padding:0 1px">${dim('1.00')}</span>`, 20], [1337, dim('(1.00)'), 22], [1360, dim('10H7'), 22],
      [1383, dim('10H7', '(8.01)'), 22], [1406, dim('10H7', '(8.018)'), 22], [1429, dim('10', '(8.018)'), 22]
    ], [[1169, 'tol1'], [1193, 'tol2'], [1208, SEP, 1], [1223, 'phi1'], [1245, 'phi2'], [1267, 'hook']])}</nx-group>
    <nx-group w="181" label="装配">
      <nx-big ml="8" w="48" icon="process">处理装配</nx-big>
      <nx-big ml="1" w="44" icon="add" caret>添加</nx-big>
      <div class="col" style="margin-left:5px;width:75px"><nx-small icon="constraint">装配约束</nx-small><nx-small icon="movecomp">移动组件</nx-small><nx-small icon="patcomp">阵列组件</nx-small></div>
    </nx-group>
    <div class="tail">${CARET}</div>
    <div class="gb">${ic('gb', 32)}<div>中国国标<br>标准件库</div></div>`
  }
})

customElements.define('nx-combo', class extends Base {
  get template() {
    return `<style>
      :host { display: flex; flex: none; width: ${this.getAttribute('w')}px; height: 19px; box-sizing: border-box; border: 1px solid #a8a8a8; align-items: center; justify-content: space-between; padding: 0 6px 0 2px; font-size: 11px; color: #222; background: #fff; }
    </style><slot></slot>${CARET}`
  }
})

customElements.define('nx-toolbar', class extends Base {
  get template() {
    return `<style>
      :host { display: flex; height: 52px; flex: none; background: #fff; border-bottom: 1px solid #b8b8b8; box-sizing: border-box; position: relative; }
      .menu { flex: 0 0 88px; display: flex; align-items: center; padding: 0 0 9px 10px; box-sizing: border-box; font-size: 11px; gap: 3px; border-right: 1px solid #ececec; height: 51px; }
      .menu u { text-decoration: underline; }
      .sec { display: flex; flex-direction: column; height: 51px; border-right: 1px solid #e8e8e8; flex: none; box-sizing: border-box; }
      .row { display: flex; align-items: center; height: 19px; margin-top: 7px; }
      .lb { display: flex; margin-top: 6px; height: 18px; font-size: 11px; color: #4a94b0; align-items: center; }
      .lb span { flex: 1; text-align: center; }
      .lb i { flex: 0 0 18px; display: flex; justify-content: center; }
      .end { position: absolute; right: 4px; bottom: 7px; line-height: 0; }
    </style>
    <div class="menu">${ic('menu', 17)}<span>菜单(<u>M</u>)</span>${CARET}</div>
    <div class="sec" style="width:822px">
      <div class="row">
        <span style="flex:0 0 11px"></span><nx-combo w="132">没有选择过滤器</nx-combo><span style="flex:0 0 9px"></span><nx-combo w="139">整个装配</nx-combo>
        ${strip(379, [[400, 'sel1'], [423, 'sel2'], [445, 'sel3'], [462, CARET, 8], [481, 'sel4'], [506, 'sel5'], [529, 'dashes'], [548, CARET, 8], [567, 'cubeg'], [592, 'cubeb'], [617, 'dots'],
          [640, 'ln'], [669, 'ln2'], [691, 'curve'], [720, 'zig'], [743, 'fork'], [769, 'ptc'], [792, 'ring'], [818, 'plus'], [843, 'ln'], [868, 'wire'], [892, 'gridc']])}
      </div>
      <div class="lb"><span>选择</span><i>${CARET}</i></div>
    </div>
    <div class="sec" style="width:238px;margin-left:2px">
      <div class="row">${strip(912, [[932, 'v1'], [956, 'v2'], [981, 'v3'], [1006, 'v4'], [1026, CARET, 8], [1042, 'v5'], [1062, CARET, 8], [1081, 'v6'], [1099, CARET, 8], [1115, 'v7'], [1135, CARET, 8]])}</div>
      <div class="lb"><span>视图</span><i>${CARET}</i></div>
    </div>
    <div class="end">${CARET}</div>`
  }
})

customElements.define('nx-main', class extends Base {
  get template() {
    return `<style>
      :host { display: flex; height: 725px; flex: none; }
      .gut { flex: 0 0 75px; display: flex; align-items: flex-end; padding: 0 0 4px 9px; box-sizing: border-box; line-height: 0; }
      .strip { flex: 0 0 75px; display: flex; align-items: flex-end; padding: 0 0 4px 9px; box-sizing: border-box; }
      .tri { width: 0; height: 0; border: 4px solid transparent; border-right: 4px solid #222; border-left: 0; }
    </style>
    <nx-rail></nx-rail>
    <nx-navigator></nx-navigator>
    <div class="gut"><div class="tri"></div></div>
    <nx-canvas></nx-canvas>
    <div class="strip"><div class="tri"></div></div>`
  }
})

customElements.define('nx-rail', class extends Base {
  get template() {
    const items = [['gearsm', 233, 16], ['tree1', 284, 25], ['rail2', 325, 25], ['rail3', 368, 24], ['books', 410, 26], ['wifi', 463, 27], ['doc', 518, 21], ['clock2', 571, 24], ['ramp', 613, 22], ['flag', 655, 25], ['robot', 697, 25], ['roles', 738, 26]]
    let prev = 220
    const html = items.map(([n, c, s], i) => {
      const half = i === 3 ? 23 : 14
      const m = c - half - prev
      prev = c + half
      return `<div class="i ${i === 3 ? 'on' : ''}" style="height:${half * 2}px;margin-top:${m}px">${ic(n, s)}</div>`
    }).join('')
    return `<style>
      :host { display: flex; flex-direction: column; flex: 0 0 33px; width: 33px; background: #d9d9d9; border-right: 1px solid #9a9a9a; box-sizing: border-box; }
      .i { display: flex; align-items: center; justify-content: center; flex: none; box-sizing: border-box; }
      .on { background: #fff; border-top: 1px solid #aaa; border-bottom: 1px solid #aaa; margin-right: -1px; }
    </style>${html}`
  }
})

customElements.define('nx-navigator', class extends Base {
  get template() {
    return `<style>
      :host { display: flex; flex-direction: column; flex: 0 0 331px; box-sizing: border-box; background: #fff; border-right: 1px solid #a8a8a8; padding-left: 7px; }
      .head { height: 29px; display: flex; align-items: center; flex: none; padding-left: 2px; width: 315px; box-sizing: border-box; justify-content: space-between; padding-right: 7px; color: #333; }
      .grid { width: 314px; height: 611px; flex: none; box-sizing: border-box; border: 1px solid #ddd; border-bottom: 0; display: flex; flex-direction: column; }
      .cols { display: grid; grid-template-columns: 198px 100px 1fr; height: 20px; flex: none; background: #f0f0f0; border-bottom: 1px solid #ccc; box-sizing: border-box; align-items: center; color: #444; }
      .cols span { padding-left: 6px; border-right: 1px solid #ccc; height: 100%; display: flex; align-items: center; box-sizing: border-box; overflow: hidden; white-space: nowrap; }
      .cols em { display: inline-block; width: 0; height: 0; border: 5px solid transparent; border-bottom: 6px solid #222; border-top: 0; margin-left: 24px; }
      .body { flex: 1; position: relative; background-image: linear-gradient(90deg, transparent 198px, #e8e8e8 198px, #e8e8e8 199px, transparent 199px), repeating-linear-gradient(#fff 0 20px, #f7f7f7 20px 40px); }
      nx-tree-row { height: 20px; }
      .sb { height: 15px; flex: none; background: #eee; position: relative; display: flex; align-items: center; justify-content: space-between; padding: 0 8px 0 6px; }
      .thumb { position: absolute; left: 18px; top: 0; width: 213px; height: 15px; box-sizing: border-box; border: 1px solid #aaa; background: linear-gradient(#f0f0f0, #bdbdbd); text-align: center; line-height: 12px; font-size: 9px; color: #333; }
      .arl, .arr { width: 0; height: 0; border: 4px solid transparent; }
      .arl { border-right: 4px solid #444; border-left: 0; }
      .arr { border-left: 4px solid #444; border-right: 0; }
      .grip { height: 5px; width: 316px; margin: 3px 0 0 -2px; flex: none; background: #cfcfcf; border-top: 1px solid #999; box-sizing: border-box; }
      .ac { width: 316px; margin-left: -2px; box-sizing: border-box; height: 24px; flex: none; display: flex; align-items: center; justify-content: space-between; border-bottom: 2px solid #cfcfcf; font-size: 14px; color: #4a7fa5; padding: 2px 6px 0 7px; }
      .ac svg { margin-top: -4px; }
    </style>
    <div class="head"><span>部件导航器</span><svg width="13" height="12"><path d="M.7.7h11.6v10.6H.7z" fill="none" stroke="#222" stroke-width="1.3"/><path d="M1 2h11" stroke="#222" stroke-width="2"/></svg></div>
    <div class="grid">
      <div class="cols"><span>名称<em></em></span><span>最新</span><span>附</span></div>
      <div class="body">
        <nx-tree-row icon="clock" text="历史记录模式" first></nx-tree-row>
        <nx-tree-row icon="wire3d" text="模型视图" plus></nx-tree-row>
        <nx-tree-row icon="camera" text="摄像机" plus check last></nx-tree-row>
      </div>
      <div class="sb"><i class="arl"></i><div class="thumb">|||</div><i class="arr"></i></div>
    </div>
    <div class="grip"></div>
    ${['相依性', '细节', '预览'].map(t => `<div class="ac"><span>${t}</span><svg width="12" height="10"><path d="M1 1l5 8 5-8" fill="none" stroke="#3f7ea6" stroke-width="2"/></svg></div>`).join('')}`
  }
})

customElements.define('nx-tree-row', class extends Base {
  get template() {
    const plus = this.hasAttribute('plus')
    const first = this.hasAttribute('first')
    const last = this.hasAttribute('last')
    return `<style>
      :host { display: flex; align-items: center; height: 20px; color: #333; position: relative; }
      .t { flex: 0 0 19px; height: 20px; }
      span { margin-left: 3px; white-space: nowrap; }
    </style>
    <svg class="t" width="19" height="20"><path d="M9.5 ${first ? 10 : 0}V${last ? 10 : 20}M9.5 10H19" stroke="#999" stroke-dasharray="1 1" fill="none"/>${plus ? '<path d="M6 10.5h7M9.5 7v7" stroke="#222"/>' : ''}</svg>
    ${this.hasAttribute('check') ? `<span style="margin:0 1px 0 0;display:inline-flex">${ic('check', 14)}</span><span style="margin:0;display:inline-flex">${ic(this.getAttribute('icon'), 15)}</span>` : `<span style="margin:0 0 0 -1px;display:inline-flex">${ic(this.getAttribute('icon'), 16)}</span>`}
    <span>${this.getAttribute('text')}</span>`
  }
})

customElements.define('nx-canvas', class extends Base {
  get template() {
    return `<style>
      :host { display: block; flex: 1; position: relative; background: linear-gradient(#b5b5b5 0, #e7e7e7 73%, #e7e7e7 100%); overflow: hidden; }
      svg { position: absolute; overflow: visible; }
      text { font: 12px "Liberation Sans", sans-serif; }
    </style>
    <svg style="left:690px;top:300px" width="40" height="70">
      <path d="M13 8l2.5 22-1 26h-2l-1-26z" fill="#1438c8"/>
      <text x="18" y="9" fill="#5a6ad8" font-size="13">ZC</text>
      <path d="M17 55l14-6" stroke="#3aa040" stroke-width="2"/>
      <path d="M17 59l14 9" stroke="#b04040" stroke-width="2.4"/>
    </svg>
    <svg style="left:50px;top:617px" width="60" height="70">
      <g transform="translate(-10 0)">
        <path d="M29 20l20 6 7 0v24l-18 9-19-7V26z" fill="#cfd4d0" stroke="#bbb"/>
        <path d="M38 20v22l-19 10M38 42l18 8M19 26l19 12 18-12" fill="none" stroke="#bbb"/>
      </g>
      <path d="M8 10l3 8h-2v26H7V18H5z" fill="#1438b0"/>
      <text x="3" y="10" fill="#5a6ad8" font-size="12">Z</text>
      <path d="M8 47l26 13" stroke="#c23a3a" stroke-width="3"/>
      <circle cx="8" cy="47" r="3" fill="#eee" stroke="#aaa"/>
      <text x="33" y="67" fill="#d05050" font-size="12">X</text>
    </svg>`
  }
})

customElements.define('nx-status', class extends Base {
  get template() {
    return `<style>
      :host { display: flex; align-items: center; height: 22px; flex: none; margin-top: auto; border-top: 1px solid #a8a8a8; box-sizing: border-box; background: #fff; padding: 0 0 4px 3px; font-size: 11px; color: #111; }
    </style><slot></slot>`
  }
})

customElements.define('nx-task', class extends Base {
  get template() {
    const on = this.hasAttribute('on')
    return `<style>
      :host { display: flex; align-items: center; justify-content: center; flex: none; width: ${this.getAttribute('w') || 59}px; height: 40px; box-sizing: border-box; margin-left: ${this.getAttribute('ml') || 0}px; ${on ? 'background: linear-gradient(rgba(255,255,255,.5), rgba(255,255,255,.25)); border: 1px solid rgba(255,255,255,.7); border-radius: 2px;' : 'border: 1px solid rgba(255,255,255,.12);'} position: relative; }
      b { position: absolute; left: 0; right: 0; top: 10px; text-align: center; font: bold 14px "Liberation Sans", sans-serif; color: #0c2c5a; }
    </style>${ic(this.getAttribute('icon'), 30)}${this.hasAttribute('ps') ? '<b>Ps</b>' : ''}`
  }
})

customElements.define('nx-taskbar', class extends Base {
  get template() {
    return `<style>
      :host { display: flex; height: 40px; flex: none; position: relative; align-items: center; overflow: hidden; color: #fff; border-top: 1px solid #16466e; box-sizing: border-box;
        background: linear-gradient(90deg, #19588f 0, #2b7fc4 22%, #2d7ec2 45%, #2a78bc 60%, #2276b8 70%, #1c5b9c 74%, #1b4f8e 85%, #1d4a86 100%); }
      .streak { position: absolute; left: 1392px; top: 0; width: 60px; height: 40px; background: linear-gradient(100deg, rgba(255,255,255,0), rgba(255,255,255,.65) 45%, rgba(255,255,255,.15) 70%, rgba(255,255,255,0)); clip-path: polygon(0 0, 30% 0, 100% 100%, 62% 100%); }
      .cell { flex: none; display: flex; align-items: center; justify-content: center; }
      .search { flex: none; width: 201px; height: 30px; margin-left: 2px; background: #eef3f9; display: flex; align-items: center; font-size: 12px; color: #5a9adf; position: relative; padding-left: 4px; box-sizing: border-box; gap: 3px; }
      .search em { font-style: normal; color: #d81818; margin-left: 21px; font-size: 13px; font-weight: bold; }
      .search b { position: absolute; right: 0; top: 0; width: 41px; height: 30px; background: #2a80ee; color: #fff; font-weight: normal; display: flex; align-items: center; justify-content: center; }
      .dots { width: 8px; height: 30px; margin-left: 1px; flex: none; background: radial-gradient(circle, #1c4a70 1px, transparent 1.2px) 0 0 / 3px 3px; }
      .tray { display: flex; position: absolute; left: 1480px; top: 0; height: 39px; align-items: center; }
      .clock { position: absolute; left: 1838px; top: 1px; width: 66px; color: #f2f6fa; text-align: center; font-size: 12.5px; line-height: 18px; }
      .show { position: absolute; right: 0; top: 1px; width: 13px; height: 39px; background: rgba(255,255,255,.15); border-left: 1px solid rgba(255,255,255,.3); box-sizing: border-box; }
    </style>
    <div class="streak"></div>
    <div class="cell" style="width:54px">${ic('orb', 36)}</div>
    <div class="cell" style="width:58px">${ic('s360', 30)}</div>
    <div class="search">${ic('ie', 21)}短时间提高成绩<em>沸</em><b>搜索</b></div>
    <div class="dots"></div>
    <div class="cell" style="width:73px;padding-left:5px;box-sizing:border-box">${ic('calc', 24, 32)}</div>
    <nx-task icon="gie" on></nx-task>
    <nx-task icon="excel" ml="3"></nx-task>
    <nx-task icon="ps" ml="3" on ps></nx-task>
    <nx-task icon="chrome" ml="2" w="60"></nx-task>
    <nx-task icon="folder" ml="0" on></nx-task>
    <nx-task icon="nxapp" ml="6" on></nx-task>
    <nx-task icon="rar" ml="4" on></nx-task>
    <div class="tray">${strip(1480, [
      [1516, 'paw', 18], [1538, 'restoret', 15], [1568, 'usb', 17], [1597, 'traycl', 17], [1622, 'trayp', 17], [1670, 'bubbles', 18],
      [1694, 'mouse', 18], [1717, 'lock', 17], [1742, 'g360', 17], [1766, 'yplus', 17], [1790, 'net', 17], [1814, 'speaker', 17]
    ])}</div>
    <div class="clock">9:36<br>2019-6-1</div>
    <div class="show"></div>`
  }
})

customElements.define('nx-cat', class extends Base {
  get template() {
    const lv = +this.getAttribute('lv') || 0
    const sign = this.getAttribute('sign')
    const sel = this.hasAttribute('sel')
    const v = this.getAttribute('v') || ''
    const alt = this.hasAttribute('alt')
    return `<style>
      :host { display: flex; align-items: center; height: 20px; box-sizing: border-box; position: relative; color: #222; white-space: nowrap; border-bottom: 1px solid #f2f2f2; ${alt ? 'background: #fafafa;' : ''} }
      svg { position: absolute; left: 0; top: 0; }
      .t { position: absolute; left: ${lv ? 42 : 23}px; }
      .sel { position: absolute; left: 20px; right: 1px; top: 0; height: 20px; background: #3a8ee6; color: #e8f4ff; padding-left: 3px; line-height: 20px; box-sizing: border-box; }
    </style>
    <svg width="44" height="20">
      ${v.includes('a') ? '<path d="M10 0v20" stroke="#999" stroke-dasharray="1 1"/>' : ''}
      ${v.includes('b') ? '<path d="M10 10v10" stroke="#999" stroke-dasharray="1 1"/>' : ''}
      ${v.includes('e') ? '<path d="M10 0v10" stroke="#999" stroke-dasharray="1 1"/>' : ''}
      ${v.includes('c') ? '<path d="M30 0v20" stroke="#99a" stroke-dasharray="1 1"/>' : ''}
      ${v.includes('d') ? '<path d="M30 0v10" stroke="#99a" stroke-dasharray="1 1"/>' : ''}
      ${lv ? '<path d="M30 10h10" stroke="#99a" stroke-dasharray="1 1"/>' : '<path d="M10 10h10" stroke="#999" stroke-dasharray="1 1"/>'}
      ${sign === '+' ? '<path d="M7 10.5h6.5M10.5 7.5v6" stroke="#222"/>' : ''}
      ${sign === '-' ? '<path d="M6 10.5h8" stroke="#222"/>' : ''}
    </svg>
    ${sel ? `<div class="sel"><slot></slot></div>` : `<div class="t"><slot></slot></div>`}`
  }
})

customElements.define('nx-item', class extends Base {
  get template() {
    const name = this.getAttribute('icon')
    return `<style>
      :host { display: flex; align-items: center; height: 26px; flex: none; font-size: 11px; color: #222; position: relative; }
      .i { flex: 0 0 33px; display: flex; justify-content: center; padding-left: 3px; box-sizing: border-box; }
    </style><div class="i">${name ? ic(name, 16) : ''}</div><slot></slot>`
  }
})

customElements.define('nx-dialog', class extends Base {
  get template() {
    const cats = [
      ['所有命令', 0, '', 'b', 1], ['所有选项卡', 0, '+', 'a'], ['所有边框条/QAT', 0, '+', 'a'], ['所有组', 0, '+', 'a'], ['所有库', 0, '+', 'a'], ['所有下拉菜单', 0, '+', 'a'],
      ['经典工具条（按组）', 0, '+', 'a'], ['菜单', 0, '+', 'a'], ['新建项', 0, '', 'a'], ['我的项', 0, '-', 'e'],
      ['我的菜单', 1, '', 'c'], ['我的组', 1, '', 'c'], ['我的库', 1, '', 'c'], ['我的下拉菜单', 1, '', 'c'], ['我的用户命令', 1, '', 'd']
    ]
    const items = [['', '制图标准'], ['draftp', '制图首选项'], ['corner', '制作拐角'], ['balance', '质量检查'], ['pt1', '中点'], ['ln3', '中点'], ['gb', '中国国标标准件库'], ['distort', '中灰色纹理'], ['', '中面首选项'], ['ln4', '重合']]
    return `<style>
      :host { position: absolute; left: 1160px; top: 196px; width: 474px; height: 529px; background: #f0f0f0; border: 1px solid #a8a8a8; border-top: 0; box-sizing: border-box; display: flex; flex-direction: column; }
      .ttl { height: 28px; flex: none; margin: 0 -1px; background: #5d8a84; color: #fff; display: flex; align-items: center; padding: 0 7px; justify-content: space-between; }
      .ttl div { display: flex; align-items: center; gap: 9px; }
      .ttl b { font: bold 15px "Liberation Sans", sans-serif; }
      .tabs { display: flex; padding: 4px 0 0 10px; height: 34px; box-sizing: border-box; flex: none; align-items: flex-end; }
      .tab { height: 27px; background: #e6e6e6; color: #333; display: flex; align-items: center; justify-content: center; margin-left: 2px; flex: none; }
      .tab.on { height: 31px; background: #fff; color: #4a8fb5; margin-left: 0; border: 1px solid #ddd; border-bottom: 0; box-sizing: border-box; margin-bottom: -1px; z-index: 1; }
      .pane { margin: 0 10px; height: 420px; background: #fff; border: 1px solid #d8d8d8; box-sizing: border-box; flex: none; display: flex; flex-direction: column; }
      .desc { padding: 14px 0 0 5px; line-height: 18px; color: #222; height: 59px; box-sizing: border-box; flex: none; white-space: nowrap; }
      .cols { display: flex; flex: none; height: 343px; }
      .left { flex: 0 0 246px; padding-left: 6px; box-sizing: border-box; border-right: 1px solid #eee; height: 343px; }
      .right { flex: 1; padding-left: 9px; box-sizing: border-box; }
      h5 { margin: 0; font-weight: normal; font-size: 14px; color: #4a94b8; height: 24px; line-height: 24px; }
      .list { width: 218px; margin-left: 10px; height: 316px; border: 1px solid #d4d4d4; box-sizing: border-box; }
      .s { display: flex; gap: 3px; height: 33px; border-bottom: 1px solid #ddd; margin: 0 8px 0 -7px; padding-left: 7px; box-sizing: border-box; }
      .s i { display: block; width: 153px; height: 21px; box-sizing: border-box; border: 1px solid #aaa; background: #fff; }
      .s span { display: flex; width: 24px; height: 23px; margin-top: -1px; border: 1px solid #ccc; box-sizing: border-box; align-items: center; justify-content: center; background: #f6f6f6; }
      .items { width: 180px; height: 258px; border: 1px solid #a8a8a8; box-sizing: border-box; position: relative; margin-top: 2px; display: flex; flex-direction: column; padding-top: 1px; }
      .au, .ad { position: absolute; left: 165px; width: 0; height: 0; border: 4px solid transparent; }
      .au { top: 9px; border-bottom: 5px solid #111; border-top: 0; }
      .ad { bottom: 6px; border-top: 5px solid #111; border-bottom: 0; }
      .th { position: absolute; left: 162px; top: 217px; width: 13px; height: 11px; background: #dcdcdc; }
      .rule { height: 1px; background: #d8d8d8; margin: 9px 6px 0 4px; }
      .btns { display: flex; justify-content: flex-end; gap: 4px; padding: 3px 13px 0 0; }
      .btns div { width: 57px; height: 28px; border: 1px solid #c4c4c4; box-sizing: border-box; display: flex; align-items: center; justify-content: center; background: #f0f0f0; color: #222; }
    </style>
    <div class="ttl"><span>定制</span><div><b>?</b><svg width="14" height="14"><path d="M1.5 1.5l11 11M12.5 1.5l-11 11" stroke="#fff" stroke-width="2.4"/></svg></div></div>
    <div class="tabs">
      <div class="tab on" style="width:53px">命令</div>
      <div class="tab" style="width:63px;margin-left:3px">选项卡/条</div>
      <div class="tab" style="width:64px">快捷方式</div>
      <div class="tab" style="width:88px">图标/工具提示</div>
    </div>
    <div class="pane">
      <div class="desc">要向功能区选项卡、边框条或 QAT 添加命令，选择一个类别并将命令从“命令”<br>列表拖至所需的位置。</div>
      <div class="cols">
        <div class="left">
          <h5 style="padding-left:7px;height:26px">类别</h5>
          <div class="list">${cats.map(([t, lv, s, v, sel], i) => `<nx-cat lv="${lv}" sign="${s}" v="${v}"${sel ? ' sel' : ''}${i % 2 ? ' alt' : ''}>${t}</nx-cat>`).join('')}</div>
          <div class="rule"></div>
        </div>
        <div class="right">
          <h5>搜索</h5>
          <div class="s"><i></i><span>${ic('mag', 17)}</span></div>
          <h5 style="height:26px;line-height:26px">项</h5>
          <div class="items"><i class="au"></i><i class="th"></i>${items.map(([n, t]) => `<nx-item${n ? ` icon="${n}"` : ''}>${t}</nx-item>`).join('')}<i class="ad"></i></div>
        </div>
      </div>
    </div>
    <div class="btns"><div>键盘...</div><div>关闭</div></div>`
  }
})

customElements.define('nx-overlay', class extends Base {
  get template() {
    return `<style>
      :host { position: absolute; left: 0; top: 0; width: 1920px; height: 1080px; pointer-events: none; display: block; }
      .arrow, .mark, .badge { position: absolute; overflow: visible; }
      .www { position: absolute; left: 1718px; top: 1038px; font: bold 16px "DejaVu Sans", sans-serif; letter-spacing: 1.6px; color: rgba(176,205,232,.78); white-space: nowrap; }
      .ime { position: absolute; left: 1788px; top: 1013px; width: 132px; height: 27px; background: #fafafa; border: 1px solid #eee; box-sizing: border-box; display: flex; align-items: center; font-size: 15px; color: #555; }
      .caret { position: absolute; left: 1908px; line-height: 0; }
      .badge text { font: bold 12px "Liberation Sans", sans-serif; }
    </style>
    <svg class="badge" style="left:1900px;top:220px" width="20" height="44">
      <defs><linearGradient id="g" x1="0" y1="0" x2="0" y2="1"><stop offset="0" stop-color="#8fe0a0"/><stop offset="1" stop-color="#28b84a"/></linearGradient></defs>
      <circle cx="22" cy="22" r="20" fill="url(#g)" stroke="#d8f2de" stroke-width="2"/>
      <text x="9" y="27" fill="#fff">50</text>
    </svg>
    <svg class="arrow" style="left:1570px;top:130px" width="60" height="70">
      <path d="M52 3l7 5-33 39 11 6-31 18 7-34 9 7z" fill="#ee1111"/>
    </svg>
    <svg class="mark" style="left:1638px;top:985px" width="70" height="78" viewBox="0 0 70 78">
      <path d="M35 0l35 20v38L35 78 0 58V20z" fill="#9fdcf8" fill-opacity=".62"/>
      <path d="M35 0l35 20v38L50 70C64 50 62 20 35 0z" fill="#6cc4ee" fill-opacity=".45"/>
      <path d="M0 20L35 10 58 24 35 24 16 30 16 58 0 58z" fill="#fff" fill-opacity=".28"/>
      <path d="M35 24l19 11v23L35 69 16 58V35z" fill="#fff" fill-opacity=".75"/>
      <path d="M35 30l14 8-14 8-14-8z" fill="#cbeafa"/><path d="M20 42l14 8v14l-14-8z" fill="#a6dcf8"/><path d="M50 42l-14 8v14l14-8z" fill="#7ccaf2"/>
      <path d="M17 66C30 80 50 78 62 62L50 70 35 78z" fill="#1a7ac0" fill-opacity=".45"/>
    </svg>
    <div class="www">WWW.3DSJW.COM</div>
    <div class="ime">${strip(1788, [[1802, 'imepaw', 18], [1828, '<span>五</span>', 18], [1852, 'moon', 16], [1880, 'dot', 16], [1905, 'gearsm', 18]])}</div>
    <div class="caret" style="top:1006px">${CARET}</div>`
  }
})
</script>
</body>
</html>
